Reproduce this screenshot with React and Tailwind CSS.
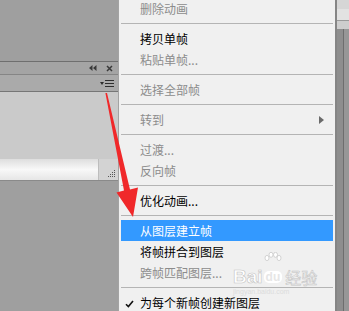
import React from 'react';

const FONT = { fontFamily: '"Noto Sans CJK SC", "Microsoft YaHei", sans-serif' };

// Menu rows top to bottom; 'sep' is a divider line
const MENU = [
  { label: '删除动画', disabled: true },
  'sep',
  { label: '拷贝单帧' },
  { label: '粘贴单帧...', disabled: true },
  'sep',
  { label: '选择全部帧', disabled: true },
  'sep',
  { label: '转到', disabled: true, submenu: true },
  'sep',
  { label: '过渡...', disabled: true },
  { label: '反向帧', disabled: true },
  'sep',
  { label: '优化动画...' },
  'sep',
  { label: '从图层建立帧', active: true },
  { label: '将帧拼合到图层' },
  { label: '跨帧匹配图层...', disabled: true },
  'sep',
  { label: '为每个新帧创建新图层', checked: true },
];

function MenuRow({ item }) {
  const color = item.active ? 'text-white' : item.disabled ? 'text-[#8c8c8c]' : 'text-black';
  return (
    <div
      className={`relative mx-[2px] flex h-[21px] items-center pl-[19px] text-[12px] leading-[21px] ${color} ${
        item.active ? 'bg-[#3399ff]' : ''
      }`}
    >
      {item.checked && (
        <svg className="absolute left-[4px] top-[8px]" width="9" height="8" viewBox="0 0 9 8">
          <path d="M1 4.2 L3.4 6.6 L8 1" fill="none" stroke="#111" strokeWidth="1.6" />
        </svg>
      )}
      <span>{item.label}</span>
      {item.submenu && (
        <svg className="absolute right-[9px] top-[7px]" width="5" height="8" viewBox="0 0 5 8">
          <path d="M0 0 L5 4 L0 8 Z" fill="#6a6a6a" />
        </svg>
      )}
    </div>
  );
}

function LeftPanel() {
  return (
    <div className="flex w-[118px] flex-col">
      <div className="h-[61px] bg-[#9f9f9f]" />
      <div className="h-px bg-[#6f6f6f]" />
      {/* panel header with collapse / close */}
      <div className="flex h-[13px] items-center justify-end gap-[9px] border-b border-[#858585] bg-[#a4a4a4] pr-[5px]">
        <svg width="8" height="6" viewBox="0 0 8 6">
          <path d="M0 3 L3.5 0 L3.5 6 Z M4 3 L7.5 0 L7.5 6 Z" fill="#3a3a3a" />
        </svg>
        <svg width="7" height="7" viewBox="0 0 7 7">
          <path d="M1 1 L6 6 M6 1 L1 6" stroke="#3a3a3a" strokeWidth="1.5" />
        </svg>
      </div>
      {/* tab bar with flyout menu icon */}
      <div className="flex h-[16px] items-center justify-end bg-[#aaaaaa] pr-[4px]">
        <svg width="14" height="9" viewBox="0 0 14 9">
          <path d="M0 3 L4 3 L2 6 Z" fill="#2e2e2e" />
          <path d="M5 1.5 H14 M5 4.5 H14 M5 7.5 H14" stroke="#2e2e2e" strokeWidth="1.2" />
        </svg>
      </div>
      <div className="h-px bg-[#767676]" />
      <div className="h-[67px] bg-[#cacaca]" />
      {/* scroll strip */}
      <div className="flex h-[21px]">
        <div className="flex-1 bg-gradient-to-b from-[#dedede] via-[#f8f8f8] to-[#e6e6e6]" />
        <div className="relative w-[20px] border-l border-[#bdbdbd] bg-[#d3d3d3]">
          <svg className="absolute bottom-[2px] right-[2px]" width="9" height="9" viewBox="0 0 9 9">
            {[[7, 1], [5, 3], [7, 3], [3, 5], [5, 5], [7, 5], [1, 7], [3, 7], [5, 7], [7, 7]].map(([x, y]) => (
              <rect key={`${x}-${y}`} x={x} y={y} width="1" height="1" fill="#555" />
            ))}
          </svg>
        </div>
      </div>
      <div className="h-px bg-[#8a8a8a]" />
      <div className="flex-1 bg-[#9f9f9f]" />
    </div>
  );
}

export default function App() {
  return (
    <div className="relative flex h-[311px] w-[349px] overflow-hidden bg-[#9f9f9f]" style={FONT}>
      <LeftPanel />

      {/* context menu */}
      <div className="w-[217px] border-l border-[#a3a3a3] bg-[#f0f0f0]">
        <div className="-mt-[2px]">
          {MENU.map((item, i) =>
            item === 'sep' ? (
              <div key={i} className="flex h-[9px] items-center px-[2px]">
                <div className="h-px flex-1 bg-[#b4b4b4]" />
              </div>
            ) : (
              <MenuRow key={i} item={item} />
            )
          )}
        </div>
      </div>

      {/* edge of the neighbouring panel */}
      <div className="flex w-[14px] flex-col border-l-2 border-[#858585]">
        <div className="h-[9px] bg-[#d6d6d6]" />
        <div className="h-[12px] border-b border-[#9a9a9a] bg-[#e2e2e2]" />
        <div className="h-[8px] bg-[#cdcdcd]" />
        <div className="flex flex-1">
          <div className="w-[6px] bg-[#8e8e8e]" />
          <div className="w-px bg-[#6e6e6e]" />
          <div className="flex-1 bg-[#979797]" />
        </div>
      </div>

      {/* red annotation arrow */}
      <svg className="pointer-events-none absolute left-0 top-0" width="349" height="311" viewBox="0 0 349 311">
        <path
          d="M105.4 93 L107 93 L130 189.4 L138 187.6 L133 217 L116.5 192.6 L124 190.6 Z"
          fill="#f0282a"
        />
      </svg>

      {/* watermark */}
      <div className="pointer-events-none absolute left-[233px] top-[252px] flex flex-col items-start text-white">
        <svg className="ml-[31px]" width="18" height="15" viewBox="0 0 18 15">
          <g fill="#fff" stroke="#c9c9c9" strokeWidth="0.8">
            <ellipse cx="3" cy="6" rx="2" ry="2.6" />
            <ellipse cx="7" cy="2.8" rx="2" ry="2.5" />
            <ellipse cx="11.5" cy="2.8" rx="2" ry="2.5" />
            <ellipse cx="15" cy="6" rx="2" ry="2.6" />
          </g>
        </svg>
        <div className="flex items-center gap-[1px] leading-none [-webkit-text-stroke:0.6px_#c4c4c4]">
          <span className="text-[19px] font-bold" style={{ fontFamily: '"Liberation Sans", Arial, sans-serif' }}>
            Bai
          </span>
          <span
            className="rounded-[5px] bg-white px-[2px] text-[12px] font-bold text-[#e6e6e6] [-webkit-text-stroke:0px]"
            style={{ fontFamily: '"Liberation Sans", Arial, sans-serif' }}
          >
            du
          </span>
          <span className="ml-[2px] text-[16px]">经验</span>
        </div>
        <span
          className="mt-[2px] text-[7px] leading-none text-[#dcdcdc]"
          style={{ fontFamily: '"Liberation Sans", Arial, sans-serif' }}
        >
          jingyan.baidu.com
        </span>
      </div>
    </div>
  );
}
